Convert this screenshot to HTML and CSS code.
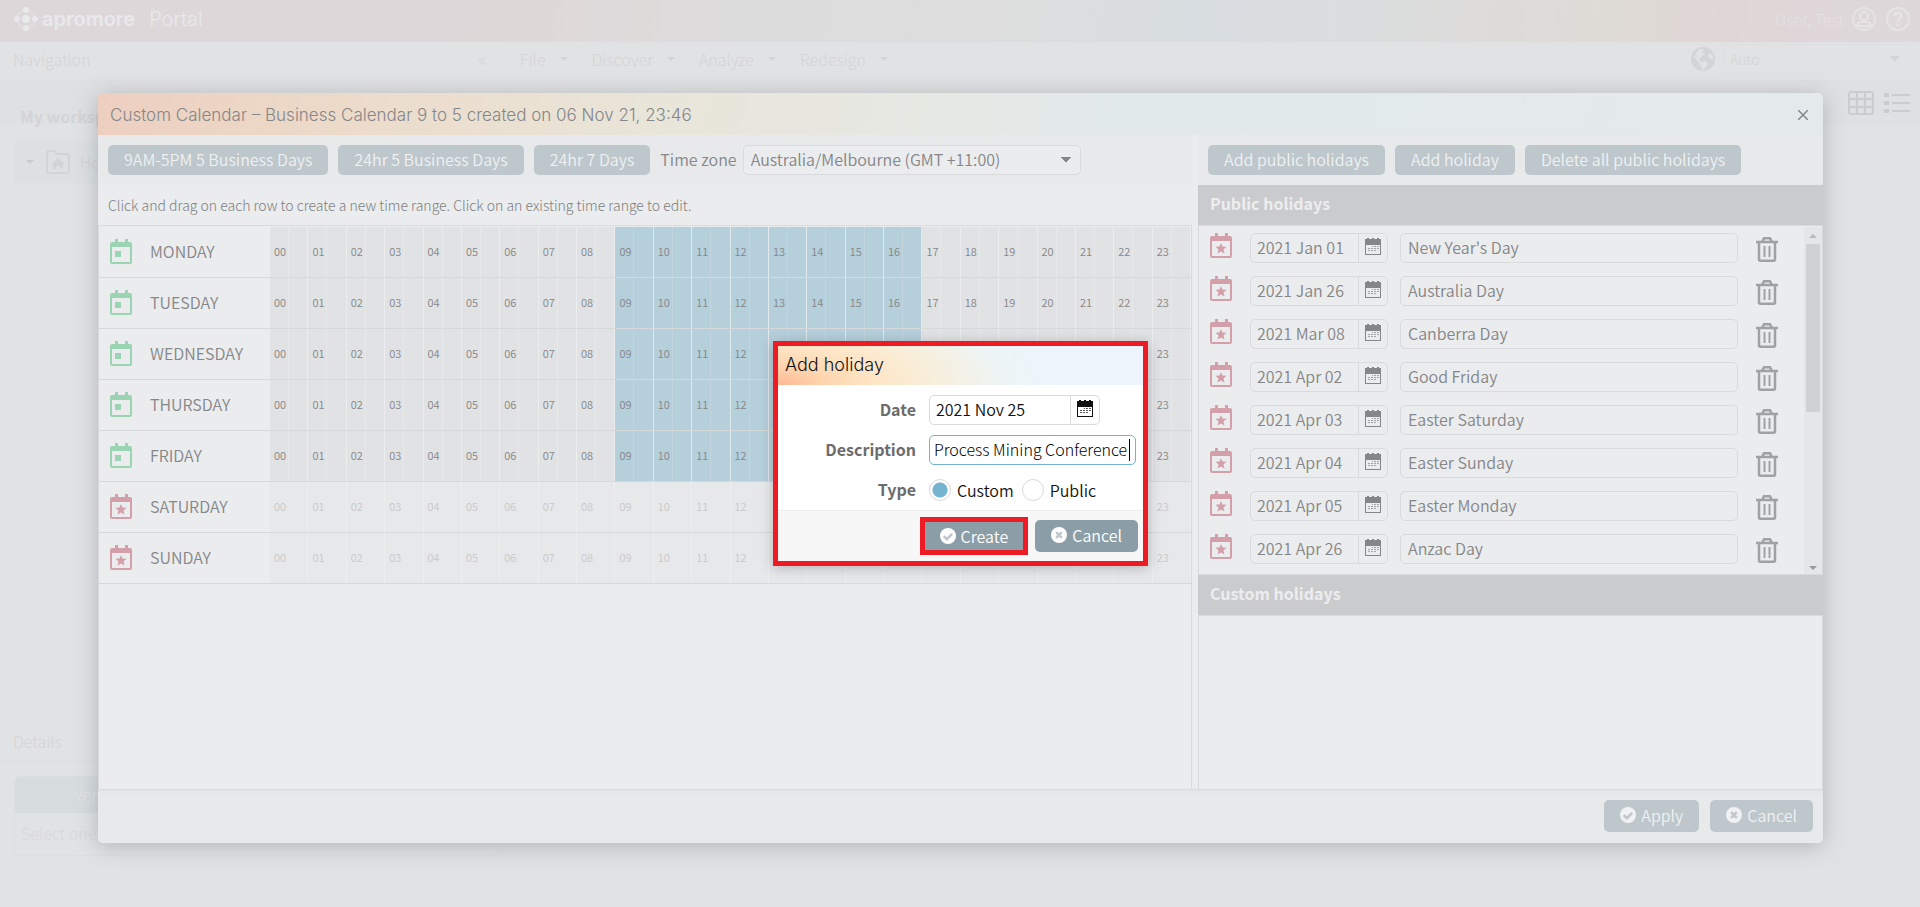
FILE: index.html
```html
<!DOCTYPE html>
<html lang="en">
<head>
<meta charset="utf-8">
<title>Apromore Portal</title>
<link rel="stylesheet" href="styles.css">
</head>
<body>
<svg class="defs" aria-hidden="true">
  <symbol id="cal-work" viewBox="0 0 22 25"><path fill="currentColor" fill-rule="evenodd" d="M5 0h3v3h7V0h3v3h2a2 2 0 0 1 2 2v18a2 2 0 0 1-2 2H2a2 2 0 0 1-2-2V5a2 2 0 0 1 2-2h3zM2 8v15h18V8zM5 12h6v6H5z"/></symbol>
  <symbol id="cal-off" viewBox="0 0 22 25"><path fill="currentColor" fill-rule="evenodd" d="M5 0h3v3h7V0h3v3h2a2 2 0 0 1 2 2v18a2 2 0 0 1-2 2H2a2 2 0 0 1-2-2V5a2 2 0 0 1 2-2h3zM2 8v15h18V8z"/><path fill="currentColor" d="M11 10l1.500 3.500 4 .3-3 2.700 1 4-3.500-2.100-3.500 2.100 1-4-3-2.700 4-.3z"/></symbol>
  <symbol id="picker" viewBox="0 0 16 17"><path fill="currentColor" fill-rule="evenodd" d="M2 0h2v1h3V0h2v1h3V0h2v1h2v16H0V1h2zM1 7v9h14V7z"/><path fill="currentColor" opacity=".7" d="M7 8h1v1H7zM9 8h2v1H9zM12 8h2v1h-2zM3 10h2v1H3zM6 10h2v1H6zM9 10h2v1H9zM12 10h2v1h-2zM3 12h2v1H3zM6 12h2v1H6zM9 12h2v1H9z"/></symbol>
  <symbol id="trash" viewBox="0 0 22 25"><g fill="none" stroke="currentColor"><path stroke-width="2.500" d="M0 5h22M6 5l2-3.700h6L16 5M3 5v17.500q0 1.200 1.300 1.200h13.400q1.300 0 1.300-1.200V5"/><path stroke-width="2" d="M8.500 9v11M13.500 9v11"/></g></symbol>
  <symbol id="ok" viewBox="0 0 16 16"><circle cx="8" cy="8" r="8" fill="currentColor"/><path class="cut" d="M3.800 8.200l3 3 5.400-5.400"/></symbol>
  <symbol id="no" viewBox="0 0 16 16"><circle cx="8" cy="8" r="8" fill="currentColor"/><path class="cut" d="M5.200 5.200l5.600 5.600M10.800 5.200l-5.600 5.600"/></symbol>
</svg>

<div class="app">
  <header class="topbar">
    <svg class="logo" viewBox="0 0 24 24"><g fill="currentColor"><circle cx="12" cy="12" r="4"/><circle cx="12" cy="3" r="3"/><circle cx="12" cy="21" r="3"/><circle cx="3" cy="12" r="3"/><circle cx="21" cy="12" r="3"/></g><circle cx="12" cy="12" r="9" fill="none" stroke="currentColor"/></svg>
    <span class="brand">apromore</span><span class="product">Portal</span>
    <span class="user">User, Test</span>
    <svg class="round" viewBox="0 0 24 24" fill="none" stroke="currentColor" stroke-width="2"><circle cx="12" cy="12" r="11"/><circle cx="12" cy="9" r="4"/><path d="M5 19q1-4 4-4h6q3 0 4 4z"/></svg>
    <svg class="round" viewBox="0 0 24 24" fill="none" stroke="currentColor" stroke-width="2"><circle cx="12" cy="12" r="11"/><path stroke-width="3" d="M8.500 9q0-3 3.500-3t3.500 3q0 1.500-2 2.500-1.500 1-1.500 3M12 16.500v2.500"/></svg>
  </header>
  <div class="menubar">
    <div class="nav-title"><span>Navigation</span><span class="collapse">«</span></div>
    <nav class="menus"><a href="#">File</a><a href="#">Discover</a><a href="#">Analyze</a><a href="#">Redesign</a></nav>
    <svg class="globe" viewBox="0 0 24 24"><path fill="currentColor" fill-rule="evenodd" d="M12 0a12 12 0 1 0 0 24 12 12 0 0 0 0-24zM8 2l5 0-2 3 3 2-4 3-2 2 2 3 4-1 3 2-2 4-3 4-2-5-2-3-5-6zM18 6l4 2 0 5-3-1-2-3z"/></svg>
    <select class="lang" aria-label="Language"><option>Auto</option></select>
  </div>
  <div class="toolbar">
    <svg class="view" viewBox="0 0 26 24" fill="none" stroke="currentColor" stroke-width="2"><rect x="1" y="1" width="24" height="22" rx="2"/><path d="M1 8h24M1 16h24M9 1v22M17 1v22"/></svg>
    <svg class="view" viewBox="0 0 26 24" fill="none" stroke="currentColor" stroke-width="2"><path d="M8 4h18M8 12h18M8 20h18"/><path stroke-width="4" d="M0 4h5M0 12h5M0 20h5"/></svg>
  </div>
  <aside class="sidebar">
    <h2 class="workspace">My workspace</h2>
    <div class="folder"><i class="tri"></i>
      <svg class="home" viewBox="0 0 24 24"><path fill="none" stroke="currentColor" stroke-width="2" d="M1 22V3q0-2 2-2h6l2 3h10q2 0 2 2v15q0 2-2 2H3q-2 0-2-1z"/><path fill="currentColor" d="M12 8l7 6h-2v5h-3v-3h-4v3H7v-5H5z"/></svg>
      <span>Home</span></div>
    <div class="details-title">Details</div>
    <div class="details"><div class="versions">Version</div><p class="hint">Select one</p></div>
  </aside>
</div>

<section class="dialog" role="dialog" aria-labelledby="cal-title">
  <header class="dialog-head"><h1 class="title" id="cal-title">Custom Calendar – Business Calendar 9 to 5 created on 06 Nov 21, 23:46</h1><button class="close" aria-label="Close"><svg viewBox="0 0 10 10"><path stroke="currentColor" stroke-width="1.500" d="M0 0l10 10M10 0L0 10"/></svg></button></header>
  <div class="panels">
    <div class="left">
      <div class="tools"><button class="btn">9AM-5PM 5 Business Days</button><button class="btn">24hr 5 Business Days</button><button class="btn">24hr 7 Days</button>
        <label class="zone-label" for="zone">Time zone</label>
        <select class="zone" id="zone"><option>Australia/Melbourne (GMT +11:00)</option></select></div>
      <p class="instruction">Click and drag on each row to create a new time range. Click on an existing time range to edit.</p>
      <div class="days" id="days"></div>
    </div>
    <div class="right">
      <div class="tools"><button class="btn">Add public holidays</button><button class="btn">Add holiday</button><button class="btn">Delete all public holidays</button></div>
      <h2 class="section">Public holidays</h2>
      <div class="scroller">
        <div class="holidays" id="holidays"></div>
        <div class="bar"><i class="arrow up"></i><i class="thumb"></i><i class="arrow down"></i></div>
      </div>
      <h2 class="section">Custom holidays</h2>
      <div class="custom"></div>
    </div>
  </div>
  <footer class="dialog-foot">
    <button class="btn act"><svg class="mark"><use href="#ok"/></svg>Apply</button>
    <button class="btn act"><svg class="mark"><use href="#no"/></svg>Cancel</button>
  </footer>
</section>

<form class="popup" role="dialog" aria-labelledby="add-title">
  <h2 class="popup-head" id="add-title">Add holiday</h2>
  <div class="fields">
    <label for="date">Date</label>
    <div class="datebox"><input id="date" value="2021 Nov 25"><button type="button" class="pick" aria-label="Choose date"><svg><use href="#picker"/></svg></button></div>
    <label for="desc">Description</label>
    <div class="descbox"><input id="desc" value="Process Mining Conference"><i class="cursor"></i></div>
    <span class="type">Type</span>
    <div class="radios"><label><input type="radio" name="type" checked>Custom</label><label><input type="radio" name="type">Public</label></div>
  </div>
  <footer class="popup-foot">
    <button type="button" class="btn act create"><svg class="mark"><use href="#ok"/></svg>Create</button>
    <button type="button" class="btn act"><svg class="mark"><use href="#no"/></svg>Cancel</button>
  </footer>
</form>
<script src="app.js"></script>
</body>
</html>
```
FILE: styles.css
```css
* { box-sizing: border-box; }
body { margin: 0; min-height: 100vh; background: #e1e2e4; color: #858688; font: 350 16px/24px "Noto Sans CJK SC", "Noto Sans", sans-serif; }
h1, h2, p { margin: 0; font-size: 16px; }
button, input, select { font: inherit; color: inherit; margin: 0; }
button { padding: 0; border: 0; background: none; }
svg { display: block; flex: none; }
.defs { position: absolute; width: 0; height: 0; }

.app { color: #d3d4d6; font-weight: 300; }
.topbar { display: flex; align-items: center; height: 42px; padding: 0 10px 4px 14px; color: #e8e9eb; background: linear-gradient(100deg, #ded7da 0%, #dfd8d9 28%, #dddcdc 38%, #dddddd 52%, #d8dde1 62%, #dcdcdc 74%, #dfdad5 85%, #dfd6d8 92%, #ded8da 100%); }
.logo { width: 24px; height: 24px; }
.brand { margin-left: 4px; font: 600 20px/24px Inter, sans-serif; }
.product { margin-left: 14px; font: 300 20px/24px Inter, sans-serif; }
.user { margin-left: auto; color: #e5e1e3; }
.round { width: 24px; height: 24px; margin-left: 10px; color: #e6e3e5; }
.user + .round { margin-left: 8px; }
.menubar { display: flex; align-items: center; height: 39px; padding: 0 10px 4px 0; border-bottom: 1px solid #dddee0; }
.nav-title { display: flex; justify-content: space-between; width: 520px; padding: 0 33px 0 13px; }
.collapse { font-size: 20px; }
.menus { display: flex; gap: 24px; margin-right: auto; }
.menus a { display: flex; align-items: center; color: inherit; text-decoration: none; }
.menus a::after { content: ""; margin-left: 14px; border: 4px solid transparent; border-top-color: currentColor; border-bottom: 0; }
.globe { width: 24px; height: 24px; margin-right: 8px; }
.lang { width: 187px; height: 30px; padding: 0 14px 0 6px; font-size: 14px; border: 1px solid #dfe0e2; border-radius: 4px; appearance: none; }
.toolbar { display: flex; justify-content: flex-end; gap: 10px; height: 43px; padding: 10px 10px 0 0; background: #dfe0e2; color: #cbccce; }
.view { width: 26px; height: 24px; }
.sidebar { width: 514px; margin-top: -20px; }
.workspace { padding-left: 20px; }
.folder { display: flex; align-items: center; height: 42px; margin: 13px 14px 0; padding-left: 12px; background: #dce0e3; }
.tri { border: 4px solid transparent; border-top-color: #cacbcd; border-bottom: 0; }
.home { width: 24px; height: 24px; margin: 0 10px 0 12px; }
.details-title { margin-top: 546px; padding: 0 13px 8px; border-bottom: 1px solid #dddee0; }
.details { height: 80px; margin: 14px; border: 1px solid #dddee0; border-radius: 6px; overflow: hidden; }
.versions { height: 36px; padding: 5px 0 0 59px; background: #d7dcdf; color: #e4e5e7; }
.hint { padding: 8px 6px; color: #d8d9db; }

.dialog { position: absolute; inset: 93px 97px 64px 98px; display: flex; flex-direction: column; background: #ebecee; border-radius: 5px; overflow: hidden; box-shadow: 0 3px 22px rgba(90, 95, 100, .35); }
.dialog-head { display: flex; justify-content: space-between; align-items: center; height: 42px; padding: 2px 15px 0 12px; background: linear-gradient(100deg, #edcfc0 0, #ecdccb 16%, #e9e5d9 32%, #e6e8e3 48%, #e2e9eb 59%, #e4eaec 100%); }
.title { font: 300 17px/24px Inter, sans-serif; }
.close svg { width: 10px; height: 10px; }
.panels { flex: 1; display: grid; grid-template-columns: minmax(0, 1094fr) minmax(0, 625fr); column-gap: 6px; border-bottom: 1px solid #d9dadc; }
.left, .right { display: flex; flex-direction: column; }
.tools { display: flex; align-items: center; gap: 10px; height: 50px; padding: 0 10px; background: #e7e9eb; }
.btn { height: 30px; padding: 0 16px 2px; border-radius: 5px; background: #bdc7cc; color: #f0f1f2; white-space: nowrap; }
.zone-label { margin-right: -4px; padding-bottom: 2px; white-space: nowrap; }
.zone { width: 338px; height: 30px; padding: 0 7px 2px; border: 1px solid #d9dadc; border-radius: 5px; appearance: none; }
.zone, .lang { background: linear-gradient(to bottom left, currentColor 50%, transparent 51%) right 14px center / 5px 6px no-repeat, linear-gradient(to bottom right, currentColor 50%, transparent 51%) right 9px center / 5px 6px no-repeat; }
.zone { background-color: #ebecee; }
.instruction { height: 40px; padding: 8px 10px; font-size: 14px; font-weight: 300; color: #7d7e80; }
.days { flex: 1; border: 1px solid #d9dadc; border-bottom: 0; padding-top: 1px; }
.day { display: grid; grid-template-columns: 171px 1fr; height: 51px; border-bottom: 1px solid #d7d8da; }
.day-name { display: flex; align-items: center; gap: 18px; padding: 0 0 2px 11px; }
.day-icon { width: 22px; height: 25px; color: #9bd4b2; }
.off .day-icon, .hol-icon { color: #d39fa9; }
.hours { display: grid; grid-template-columns: repeat(24, minmax(0, 1fr)); }
.hour { padding-left: 4px; border-right: 1px solid #ecedef; font-size: 11px; line-height: 48px; background: linear-gradient(90deg, transparent 18px, #e7e8ea 18px, #e7e8ea 19px, transparent 19px), #e1e2e4; }
.hour.busy { border-color: #e2e9ed; background: linear-gradient(90deg, transparent 18px, #c2d5df 18px, #c2d5df 19px, transparent 19px), #b5cfdb; }
.off .hour { color: #c8c9cb; background-color: #e7e8ea; }
.section { height: 40px; padding: 6px 12px; background: #cacbcd; color: #ecedef; }
.scroller { display: flex; height: 350px; border: 1px solid #d9dadc; }
.holidays { flex: 1; padding: 7px 0 0 11px; }
.holiday { display: grid; grid-template-columns: 22px 138px minmax(0, 1fr) 22px; align-items: start; padding-right: 26px; margin-bottom: 13px; }
.hol-icon { width: 22px; height: 25px; }
.holiday .datebox { margin-left: 18px; width: 138px; }
.holiday .hol-name { margin: 0 18px 0 30px; }
.bin { width: 22px; height: 25px; margin-top: 4px; color: #a0a1a3; }
.bin svg, .pick svg { width: 100%; height: 100%; }
.datebox { display: flex; height: 30px; border: 1px solid #d9dadc; border-radius: 5px; }
.datebox input { flex: 1; min-width: 0; padding: 0 6px 2px; border: 0; border-right: 1px solid #d9dadc; background: none; }
.pick { width: 28px; padding: 4px 6px 7px; }
.hol-name { height: 30px; padding: 0 7px 2px; border: 1px solid #d9dadc; border-radius: 5px; background: none; min-width: 0; }
.bar { display: flex; flex-direction: column; align-items: center; width: 18px; margin-top: 1px; background: #e5e6e8; }
.arrow { border: 4px solid transparent; }
.up { margin: 3px 0 6px; border-bottom-color: #b8b9bb; }
.thumb { width: 14px; height: 168px; background: #d0d1d3; }
.down { margin-top: auto; border-top-color: #98999b; }
.custom { flex: 1; border: solid #d9dadc; border-width: 1px 1px 0; }
.dialog-foot { display: flex; justify-content: flex-end; gap: 11px; height: 53px; padding: 10px; background: linear-gradient(#e3e4e6, #e8e9eb 5px); }
.act { display: flex; align-items: center; gap: 5px; height: 32px; }
.mark { width: 16px; height: 16px; }
.cut { fill: none; stroke: #bdc7cc; stroke-width: 2.500; }

.popup { position: absolute; top: 341px; left: calc(50% - 187px); width: 375px; border: 5px solid #ed1c24; background: #fff; color: #111; box-shadow: 0 2px 12px rgba(60, 60, 60, .3); }
.popup-head { height: 39px; padding: 7px; font: 300 18px/24px Inter, sans-serif; background: radial-gradient(ellipse 270px 110px at 0 100%, #fdb994 0, #fdd5ae 17%, #fee5c5 35%, #f9eed9 55%, #eef4f4 82%, #edf4fc 100%); }
.fields { display: grid; grid-template-columns: 138px 1fr; gap: 10px 13px; padding: 10px 7px 5px 0; align-items: center; }
.fields > label, .type { padding-bottom: 2px; text-align: right; font-weight: bold; color: #6c6c6c; }
.fields .datebox { width: 171px; }
.popup .cut { stroke: #8b9ea8; }
.descbox { position: relative; }
.descbox input { display: block; width: 100%; height: 30px; padding: 0 4px 2px; border: 1px solid #75b4cf; border-radius: 5px; background: none; font-weight: 300; color: #000; }
.cursor { position: absolute; right: 6px; top: 4px; width: 1px; height: 22px; background: #000; }
.radios { display: flex; align-items: center; gap: 8px; height: 30px; }
.radios label { display: flex; align-items: center; gap: 6px; }
.radios input { appearance: none; width: 22px; height: 22px; border: 1px solid #d9d9d9; border-radius: 50%; }
.radios input:checked { background: radial-gradient(circle, #75b4cf 7px, transparent 8px); }
.popup-foot { display: flex; align-items: center; justify-content: flex-end; gap: 7px; height: 51px; padding: 0 5px; background: #f7f7f7; border-top: 1px solid #eee; }
.popup .btn { background: #8b9ea8; color: #fff; }
.popup .create { height: 38px; padding: 0 15px; border: 5px solid #ed1c24; border-radius: 0; }
```
FILE: app.js
```js
const days = ["MONDAY", "TUESDAY", "WEDNESDAY", "THURSDAY", "FRIDAY", "SATURDAY", "SUNDAY"];
document.getElementById("days").innerHTML = days.map((name, d) => {
  const off = d > 4;
  const hours = Array.from({ length: 24 }, (_, h) =>
    `<span class="hour${!off && h > 8 && h < 17 ? " busy" : ""}">${String(h).padStart(2, "0")}</span>`).join("");
  return `<div class="day${off ? " off" : ""}"><div class="day-name"><svg class="day-icon"><use href="#cal-${off ? "off" : "work"}"/></svg>${name}</div><div class="hours">${hours}</div></div>`;
}).join("");

const holidays = [
  ["2021 Jan 01", "New Year's Day"], ["2021 Jan 26", "Australia Day"], ["2021 Mar 08", "Canberra Day"],
  ["2021 Apr 02", "Good Friday"], ["2021 Apr 03", "Easter Saturday"], ["2021 Apr 04", "Easter Sunday"],
  ["2021 Apr 05", "Easter Monday"], ["2021 Apr 26", "Anzac Day"]
];
document.getElementById("holidays").innerHTML = holidays.map(([date, name]) =>
  `<div class="holiday"><svg class="hol-icon"><use href="#cal-off"/></svg>
   <div class="datebox"><input value="${date}" aria-label="Date"><button class="pick" aria-label="Choose date"><svg><use href="#picker"/></svg></button></div>
   <input class="hol-name" value="${name}" aria-label="Description">
   <button class="bin" aria-label="Delete"><svg><use href="#trash"/></svg></button></div>`).join("");
```
